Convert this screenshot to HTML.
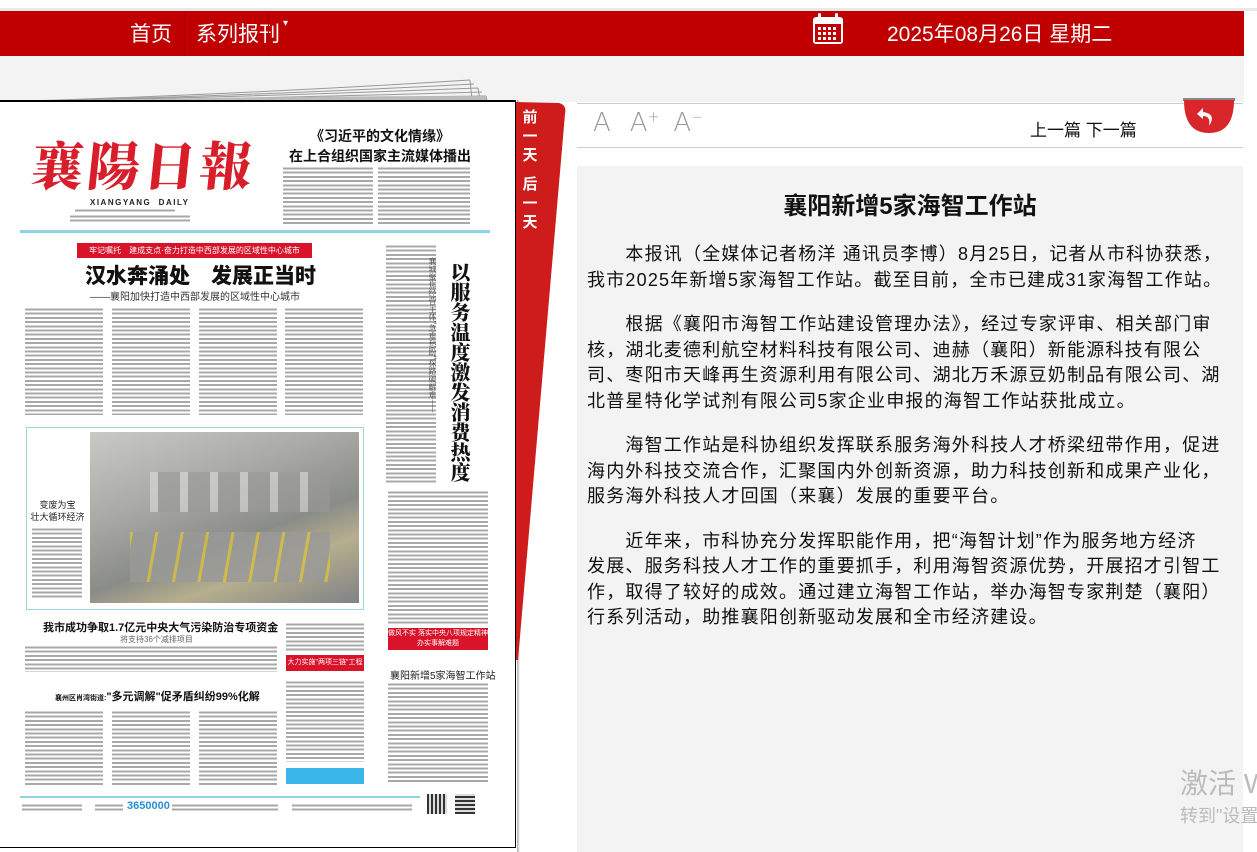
<!DOCTYPE html>
<html><head><meta charset="utf-8">
<style>
*{margin:0;padding:0;box-sizing:border-box}
body{width:1257px;height:852px;overflow:hidden;background:#fff;font-family:"Liberation Sans","Noto Sans CJK SC",sans-serif;position:relative}
.abs{position:absolute}
.nav{left:0;top:11px;width:1244px;height:45px;background:#c00000}
.nav span{position:absolute;top:7px;color:#fff;font-size:21px;white-space:nowrap}
.gray{left:0;top:56px;width:1244px;height:46px;background:#f3f3f3}
.paper{left:0;top:100px;width:516px;height:748px;background:#fff;border:1px solid #000;border-left:none;border-top:2px solid #000;overflow:hidden}
.tx{position:absolute;background:repeating-linear-gradient(#fff 0,#fff 1.5px,#a8a8a8 1.5px,#a8a8a8 3.5px,#fff 3.5px,#fff 4.2px)}
.red{position:absolute;background:#d8132a;color:#fff;font-size:9px;text-align:center;white-space:nowrap;overflow:hidden}
.p{font-size:18px;line-height:25.5px;color:#111;margin-bottom:19px;white-space:nowrap;letter-spacing:1.2px;font-family:"Liberation Sans","Noto Sans CJK SC",sans-serif}
.vt{position:absolute;writing-mode:vertical-rl;font-family:'Noto Serif CJK SC',serif;font-weight:900;color:#111;white-space:nowrap}
</style></head><body>
<div class="abs" style="left:0;top:8px;width:1257px;height:3px;background:#e8e8e8"></div>
<div class="abs nav">
<span style="left:130px">首页</span>
<div class="abs" style="left:184px;top:0;width:1px;height:45px;background:#a80000"></div>
<span style="left:196px">系列报刊<small style="font-size:10px;vertical-align:top;margin-left:3px">▾</small></span>
<div class="abs" style="left:268px;top:0;width:1px;height:45px;background:#a80000"></div>
<svg class="abs" style="left:812px;top:2px" width="32" height="32" viewBox="0 0 32 32">
<rect x="1" y="4" width="30" height="27" rx="3" fill="#fff"/>
<rect x="3" y="11" width="26" height="18" fill="#c00000"/>
<rect x="6" y="0" width="3" height="7" rx="1.5" fill="#fff"/><rect x="23" y="0" width="3" height="7" rx="1.5" fill="#fff"/>
<g fill="#fff"><rect x="6" y="14" width="3" height="3"/><rect x="11" y="14" width="3" height="3"/><rect x="16" y="14" width="3" height="3"/><rect x="21" y="14" width="3" height="3"/>
<rect x="6" y="19" width="3" height="3"/><rect x="11" y="19" width="3" height="3"/><rect x="16" y="19" width="3" height="3"/><rect x="21" y="19" width="3" height="3"/>
<rect x="6" y="24" width="3" height="3"/><rect x="11" y="24" width="3" height="3"/><rect x="16" y="24" width="3" height="3"/><rect x="21" y="24" width="3" height="3"/></g></svg>
<span style="left:887px">2025年08月26日 星期二</span>
</div>
<div class="abs gray"></div>
<svg class="abs" style="left:0;top:68px" width="490" height="36" viewBox="0 0 490 36">
<g fill="none" stroke="#999" stroke-width="1">
<path d="M0 34 Q250 26 470 12"/><path d="M0 34 Q250 28 474 16"/><path d="M0 34 Q250 29 478 20"/><path d="M0 34 Q250 31 482 24"/><path d="M0 34 Q250 32 486 28"/>
<path d="M470 12 L472 32"/><path d="M478 20 L480 32"/><path d="M486 28 L487 33"/></g>
<path d="M0 34 Q250 28 486 28 L486 32 L0 34Z" fill="#bbb"/>
</svg>
<div class="abs paper">
<div class="abs" style="left:32px;top:30px;font-family:'Noto Serif CJK SC',serif;font-weight:900;color:#d81e2a;font-size:52px;letter-spacing:4px;line-height:62px;transform:skewX(-6deg)">襄陽日報</div>
<div class="abs" style="left:90px;top:96px;font-size:8px;font-weight:bold;color:#222;letter-spacing:1.5px">XIANGYANG&nbsp;&nbsp;DAILY</div>
<div class="tx" style="left:75px;top:106px;width:100px;height:4px"></div>
<div class="tx" style="left:70px;top:112px;width:120px;height:9px"></div>
<div class="abs" style="left:285px;top:24px;width:190px;text-align:center;font-size:14px;font-weight:bold;color:#111;line-height:20px">《习近平的文化情缘》<br>在上合组织国家主流媒体播出</div>
<div class="tx" style="left:283px;top:64px;width:90px;height:58px"></div>
<div class="tx" style="left:378px;top:64px;width:92px;height:58px"></div>
<div class="abs" style="left:20px;top:128px;width:470px;height:3px;background:#8fd3e6"></div>
<div class="red" style="left:77px;top:141px;width:235px;height:15px;font-size:8px;line-height:15px">牢记嘱托　建成支点·奋力打造中西部发展的区域性中心城市</div>
<div class="abs" style="left:85px;top:158px;font-size:21px;font-weight:900;color:#111;white-space:nowrap">汉水奔涌处　发展正当时</div>
<div class="abs" style="left:90px;top:186px;font-size:10px;color:#333;white-space:nowrap">——襄阳加快打造中西部发展的区域性中心城市</div>
<div class="tx" style="left:25px;top:205px;width:78px;height:108px"></div>
<div class="tx" style="left:112px;top:205px;width:78px;height:108px"></div>
<div class="tx" style="left:199px;top:205px;width:78px;height:108px"></div>
<div class="tx" style="left:285px;top:205px;width:78px;height:108px"></div>
<div class="abs" style="left:26px;top:325px;width:338px;height:183px;border:1px solid #9cd4e4"></div>
<div class="abs" style="left:90px;top:330px;width:269px;height:171px;background:linear-gradient(160deg,#c9c9c5 0%,#a8a8a4 35%,#8a8c88 60%,#b6ae8e 75%,#7f8285 100%)"></div>
<div class="abs" style="left:150px;top:370px;width:180px;height:40px;background:repeating-linear-gradient(90deg,#ddd 0,#ddd 8px,#999 8px,#999 30px);opacity:.6"></div>
<div class="abs" style="left:130px;top:430px;width:200px;height:50px;background:repeating-linear-gradient(100deg,#d8c040 0,#d8c040 3px,transparent 3px,transparent 25px),#9a9a98;opacity:.85"></div>
<div class="abs" style="left:30px;top:397px;width:55px;text-align:center;font-size:9px;color:#222;line-height:12px">变废为宝<br>壮大循环经济</div>
<div class="tx" style="left:32px;top:425px;width:50px;height:72px"></div>
<div class="tx" style="left:386px;top:142px;width:50px;height:240px"></div>
<div class="vt" style="left:427px;top:155px;font-size:8px;color:#444;font-weight:normal">襄城聚焦经营主体"急难愁盼"探路破解难——</div>
<div class="vt" style="left:448px;top:160px;font-size:20px;line-height:24px">以服务温度激发消费热度</div>
<div class="tx" style="left:388px;top:388px;width:100px;height:134px"></div>
<div class="abs" style="left:43px;top:517px;font-size:11px;font-weight:bold;color:#111;white-space:nowrap">我市成功争取1.7亿元中央大气污染防治专项资金</div>
<div class="abs" style="left:120px;top:532px;font-size:8px;color:#666;white-space:nowrap">将支持36个减排项目</div>
<div class="tx" style="left:25px;top:543px;width:252px;height:27px"></div>
<div class="tx" style="left:286px;top:520px;width:78px;height:30px"></div>
<div class="red" style="left:286px;top:553px;width:78px;height:16px;line-height:16px;font-size:7px">大力实施"两项三链"工程</div>
<div class="tx" style="left:286px;top:578px;width:78px;height:82px"></div>
<div class="abs" style="left:55px;top:586px;font-size:11px;font-weight:bold;color:#111;white-space:nowrap"><small style="font-size:7px">襄州区肖湾街道:</small>"多元调解"促矛盾纠纷99%化解</div>
<div class="tx" style="left:25px;top:608px;width:78px;height:75px"></div>
<div class="tx" style="left:112px;top:608px;width:78px;height:75px"></div>
<div class="tx" style="left:199px;top:608px;width:78px;height:75px"></div>
<div class="abs" style="left:286px;top:666px;width:78px;height:16px;background:#3ab6ea"></div>
<div class="red" style="left:388px;top:526px;width:100px;height:22px;font-size:7px;line-height:10px;padding-top:1px">做风不实 落实中央八项规定精神<br>办实事解难题</div>
<div class="abs" style="left:390px;top:565px;font-size:10px;color:#222;white-space:nowrap">襄阳新增5家海智工作站</div>
<div class="tx" style="left:388px;top:580px;width:100px;height:102px"></div>
<div class="abs" style="left:20px;top:694px;width:400px;height:2px;background:#8fd3e6"></div>
<div class="tx" style="left:22px;top:701px;width:60px;height:9px"></div>
<div class="tx" style="left:95px;top:701px;width:28px;height:9px"></div>
<div class="abs" style="left:127px;top:698px;font-size:11px;font-weight:bold;color:#2a8fd0">3650000</div>
<div class="tx" style="left:172px;top:701px;width:106px;height:9px"></div>
<div class="tx" style="left:292px;top:701px;width:120px;height:9px"></div>
<div class="abs" style="left:427px;top:692px;width:20px;height:20px;background:repeating-linear-gradient(90deg,#333 0,#333 2px,#ddd 2px,#ddd 4px)"></div>
<div class="abs" style="left:455px;top:692px;width:20px;height:20px;background:repeating-linear-gradient(0deg,#333 0,#333 2px,#ddd 2px,#ddd 4px)"></div>
</div>
<div class="abs" style="left:517px;top:100px;width:3px;height:752px;background:linear-gradient(90deg,#aaa,#fff)"></div>
<svg class="abs" style="left:515px;top:100px" width="55" height="560" viewBox="0 0 55 560">
<path d="M1 2 L44 3 Q52 5 50 14 L3 560 L1 560 Z" fill="#ce1c1c"/>
</svg>
<div class="abs" style="left:521px;top:108px;width:18px;color:#fff;font-weight:bold;font-size:15px;line-height:19px;text-align:center">前<br>一<br>天<br><div style="height:10px"></div>后<br>一<br>天</div>
<div class="abs" style="left:577px;top:103px;width:666px;height:1px;background:#ccc"></div>
<div class="abs" style="left:577px;top:147px;width:666px;height:1px;background:#ccc"></div>
<div class="abs" style="left:593px;top:108px;font-size:26px;color:#999;font-family:'DejaVu Sans',sans-serif;font-weight:300;white-space:nowrap">A<span style="margin-left:19px">A<sup style="font-size:14px">+</sup></span><span style="margin-left:14px">A<sup style="font-size:14px">−</sup></span></div>
<div class="abs" style="left:1030px;top:116px;font-size:17px;color:#111;white-space:nowrap">上一篇 下一篇</div>
<svg class="abs" style="left:1183px;top:98px" width="52" height="38" viewBox="0 0 52 38">
<rect x="0" y="0" width="52" height="3" fill="#888"/>
<path d="M1 2 L51 2 Q51 35 26 35 Q1 35 1 2Z" fill="#d9262a"/>
<path d="M20 10 L14 16 L20 21 L20 18 Q28 18 26 28 Q34 16 20 14Z" fill="#fff"/>
</svg>
<div class="abs" style="left:577px;top:166px;width:666px;height:686px;background:#f3f3f3"></div>
<div class="abs" style="left:577px;top:186px;width:666px;text-align:center;font-size:24px;font-weight:bold;color:#111">襄阳新增5家海智工作站</div>
<div class="abs" style="left:587px;top:242px;width:670px">
<p class="p">　　本报讯（全媒体记者杨洋 通讯员李博）8月25日，记者从市科协获悉，<br>我市2025年新增5家海智工作站。截至目前，全市已建成31家海智工作站。</p>
<p class="p">　　根据《襄阳市海智工作站建设管理办法》，经过专家评审、相关部门审<br>核，湖北麦德利航空材料科技有限公司、迪赫（襄阳）新能源科技有限公<br>司、枣阳市天峰再生资源利用有限公司、湖北万禾源豆奶制品有限公司、湖<br>北普星特化学试剂有限公司5家企业申报的海智工作站获批成立。</p>
<p class="p">　　海智工作站是科协组织发挥联系服务海外科技人才桥梁纽带作用，促进<br>海内外科技交流合作，汇聚国内外创新资源，助力科技创新和成果产业化，<br>服务海外科技人才回国（来襄）发展的重要平台。</p>
<p class="p">　　近年来，市科协充分发挥职能作用，把“海智计划”作为服务地方经济<br>发展、服务科技人才工作的重要抓手，利用海智资源优势，开展招才引智工<br>作，取得了较好的成效。通过建立海智工作站，举办海智专家荆楚（襄阳）<br>行系列活动，助推襄阳创新驱动发展和全市经济建设。</p>
</div>
<div class="abs" style="left:1180px;top:762px;font-size:28px;color:#bbb;white-space:nowrap">激活 W</div>
<div class="abs" style="left:1180px;top:802px;font-size:18px;color:#bbb;white-space:nowrap">转到"设置</div>
</body></html>
